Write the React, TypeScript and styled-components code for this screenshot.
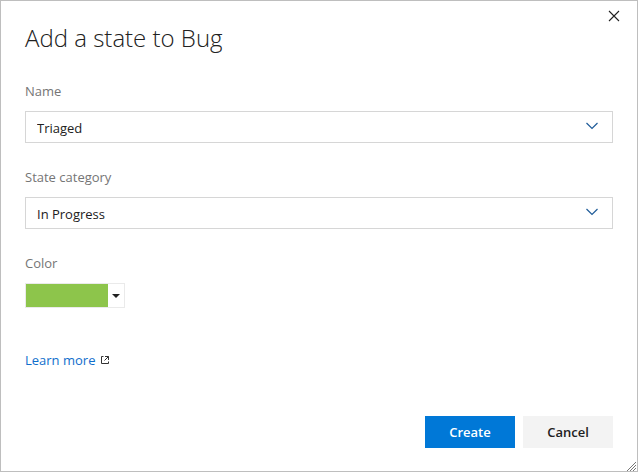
import React, { useState } from "react";
import styled, { createGlobalStyle } from "styled-components";

const GlobalStyle = createGlobalStyle`
  *, *::before, *::after { box-sizing: border-box; }
  body { margin: 0; background: #fff; }
  body, button, input, select { font-family: "Open Sans", "Noto Sans", sans-serif; font-size: 13px; }
`;

const Dialog = styled.section`
  position: relative;
  display: flex;
  flex-direction: column;
  min-height: 100vh;
  padding: 19px 24px 23px;
  border: 1px solid #bebebe;
  background: #fff;
  color: #212121;
`;

const Title = styled.h1`
  margin: 0 0 25px;
  font-size: 24px;
  line-height: 36px;
  font-weight: 300;
`;

const CloseButton = styled.button`
  position: absolute;
  top: 4px;
  right: 12px;
  display: grid;
  place-items: center;
  width: 22px;
  height: 22px;
  padding: 0;
  border: 0;
  background: transparent;
  color: #212121;
`;

const Form = styled.form`
  display: flex;
  flex: 1;
  flex-direction: column;
`;

const Field = styled.div`
  display: flex;
  flex-direction: column;
  align-items: flex-start;
  gap: 10px;
  margin-bottom: 24px;
`;

const Label = styled.label`
  line-height: 20px;
  color: #757575;
`;

const Combo = styled.div`
  display: flex;
  align-items: center;
  width: 100%;
  height: 32px;
  border: 1px solid #d6d6d6;
`;

const ComboInput = styled.input`
  flex: 1;
  min-width: 0;
  height: 100%;
  padding: 2px 11px 0;
  border: 0;
  outline: 0;
  background: transparent;
  color: #212121;
`;

const ComboButton = styled.button`
  display: grid;
  place-items: center;
  width: 40px;
  height: 100%;
  padding: 0 0 2px;
  border: 0;
  background: transparent;
`;

const ComboSelect = styled.select`
  display: block;
  grid-area: 1 / 1;
  width: 100%;
  height: 100%;
  padding: 2px 40px 0 11px;
  border: 0;
  outline: 0;
  appearance: none;
  background: transparent;
  color: #212121;
`;

const SelectBox = styled.div`
  display: grid;
  align-items: center;
  width: 100%;
  height: 32px;
  border: 1px solid #d6d6d6;
`;

const SelectArrow = styled.span`
  display: grid;
  grid-area: 1 / 1;
  place-items: center;
  justify-self: end;
  width: 40px;
  padding-bottom: 2px;
  pointer-events: none;
`;

const ColorPicker = styled.button`
  display: flex;
  width: 100px;
  height: 25px;
  padding: 0;
  border: 1px solid #eaeaea;
  background: #fff;
`;

const Swatch = styled.span<{ $color: string }>`
  flex: 1;
  align-self: stretch;
  background: ${(p) => p.$color};
`;

const SwatchArrow = styled.span`
  display: grid;
  place-items: center;
  align-self: stretch;
  width: 16px;
`;

const LearnMore = styled.a`
  display: flex;
  align-items: center;
  align-self: flex-start;
  gap: 6px;
  margin-top: 18px;
  line-height: 20px;
  color: #106ecc;
  text-decoration: none;
`;

const Actions = styled.footer`
  display: flex;
  justify-content: flex-end;
  gap: 8px;
  margin-top: auto;
`;

const ActionButton = styled.button<{ $primary?: boolean }>`
  width: 90px;
  height: 32px;
  padding: 0;
  border: 0;
  font-weight: 600;
  background: ${(p) => (p.$primary ? "#0078d7" : "#f3f3f3")};
  color: ${(p) => (p.$primary ? "#fff" : "#212121")};
`;

const ResizeGrip = styled.svg`
  position: absolute;
  right: 1px;
  bottom: 0;
  display: block;
`;

const Chevron = () => (
  <svg width="14" height="8" viewBox="0 0 14 8" fill="none" stroke="#1f5c99" strokeWidth="1.2" aria-hidden="true">
    <path d="M1.5 1 7 6.5 12.5 1" />
  </svg>
);

export default function App() {
  const [name, setName] = useState("Triaged");
  const [category, setCategory] = useState("In Progress");

  return (
    <>
      <GlobalStyle />
      <Dialog role="dialog" aria-labelledby="dialog-title">
        <Title id="dialog-title">Add a state to Bug</Title>
        <CloseButton type="button" aria-label="Close">
          <svg width="12" height="12" viewBox="0 0 12 12" stroke="currentColor" strokeWidth="1.1" aria-hidden="true">
            <path d="M1 1 11 11M11 1 1 11" />
          </svg>
        </CloseButton>
        <Form onSubmit={(e) => e.preventDefault()}>
          <Field>
            <Label htmlFor="state-name">Name</Label>
            <Combo>
              <ComboInput id="state-name" type="text" value={name} onChange={(e) => setName(e.target.value)} />
              <ComboButton type="button" aria-label="Show names">
                <Chevron />
              </ComboButton>
            </Combo>
          </Field>
          <Field>
            <Label htmlFor="state-category">State category</Label>
            <SelectBox>
              <ComboSelect id="state-category" value={category} onChange={(e) => setCategory(e.target.value)}>
                <option>In Progress</option>
              </ComboSelect>
              <SelectArrow>
                <Chevron />
              </SelectArrow>
            </SelectBox>
          </Field>
          <Field>
            <Label htmlFor="state-color">Color</Label>
            <ColorPicker id="state-color" type="button">
              <Swatch $color="#8dc54b" />
              <SwatchArrow>
                <svg width="8" height="4" viewBox="0 0 8 4" fill="#212121" aria-hidden="true">
                  <path d="M0 0H8L4 4Z" />
                </svg>
              </SwatchArrow>
            </ColorPicker>
          </Field>
          <LearnMore href="#learn-more">
            Learn more
            <svg width="8" height="8" viewBox="0 0 8 8" fill="none" stroke="#333" aria-hidden="true">
              <path d="M2.5 .5H.5V7.5H7.5V5.5" />
              <path d="M4 .5H7.5V4M7.5.5 3.5 4.5" />
            </svg>
          </LearnMore>
          <Actions>
            <ActionButton type="submit" $primary>Create</ActionButton>
            <ActionButton type="button">Cancel</ActionButton>
          </Actions>
        </Form>
        <ResizeGrip width="9" height="9" viewBox="0 0 9 9" stroke="#777" aria-hidden="true">
          <path d="M0 9 9 0M3 9 9 3M6 9 9 6" />
        </ResizeGrip>
      </Dialog>
    </>
  );
}
